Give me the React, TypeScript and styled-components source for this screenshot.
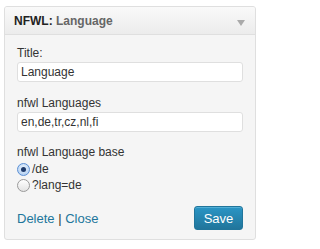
import React from "react";
import styled, { createGlobalStyle } from "styled-components";

const Global = createGlobalStyle`
  html, body { margin: 0; padding: 0; background: #ffffff; }
  body { font-family: "Liberation Sans", Arial, sans-serif; font-size: 12px; color: #333; }
`;

const Widget = styled.div`
  margin: 6px 0 0 4px;
  width: 250px;
  border: 1px solid #dfdfdf;
  border-radius: 3px;
  background: #f5f5f5;
  overflow: hidden;
`;

const Header = styled.div`
  height: 27px;
  display: flex;
  align-items: center;
  justify-content: space-between;
  padding: 0 10px 0 9px;
  background: linear-gradient(to bottom, #f9f9f9, #ececec);
  border-bottom: 1px solid #dfdfdf;
`;

const Title = styled.h4`
  margin: 0;
  font-size: 12px;
  font-weight: bold;
  color: #222;
`;

const TitleSub = styled.span`
  color: #666;
`;

const Arrow = styled.span`
  width: 0;
  height: 0;
  margin-top: 4px;
  border-left: 4px solid transparent;
  border-right: 4px solid transparent;
  border-top: 6px solid #aaa;
`;

const Body = styled.div`
  padding: 10px 12px 9px 12px;
`;

const Field = styled.div<{ $gap?: number }>`
  margin-bottom: ${(p) => p.$gap ?? 13}px;
`;

const Label = styled.label`
  display: block;
  line-height: 16px;
  color: #333;
  margin-bottom: 1px;
`;

const Input = styled.input`
  box-sizing: border-box;
  display: block;
  width: 226px;
  height: 20px;
  padding: 0 3px;
  border: 1px solid #dfdfdf;
  border-radius: 3px;
  background: #fff;
  font-family: "Liberation Sans", Arial, sans-serif;
  font-size: 12px;
  color: #333;
  outline: none;
`;

const RadioRow = styled.label`
  display: flex;
  align-items: center;
  height: 16px;
  gap: 2px;
  color: #333;
`;

const RadioDot = styled.span<{ $on?: boolean }>`
  box-sizing: border-box;
  width: 13px;
  height: 13px;
  border-radius: 50%;
  display: inline-flex;
  align-items: center;
  justify-content: center;
  border: 1px solid ${(p) => (p.$on ? "#5b8fd4" : "#9a9a9a")};
  background: ${(p) =>
    p.$on
      ? "radial-gradient(circle at 50% 35%, #e8f2fc, #a9c9ef)"
      : "linear-gradient(to bottom, #ffffff, #e3e3e3)"};
  &::after {
    content: "";
    width: 5px;
    height: 5px;
    border-radius: 50%;
    background: ${(p) => (p.$on ? "#1e3a6b" : "transparent")};
  }
`;

const Footer = styled.div`
  margin-top: 13px;
  display: flex;
  align-items: center;
  justify-content: space-between;
`;

const Links = styled.div`
  font-size: 13px;
  color: #333;
`;

const Link = styled.a`
  color: #21759b;
  text-decoration: none;
`;

const SaveButton = styled.button`
  box-sizing: border-box;
  width: 49px;
  height: 24px;
  border: 1px solid #21759b;
  border-radius: 3px;
  background: linear-gradient(to bottom, #2a95c5, #21759b);
  color: #fff;
  font-family: "Liberation Sans", Arial, sans-serif;
  font-size: 13px;
  padding: 0;
  box-shadow: inset 0 1px 0 rgba(120, 200, 230, 0.5);
`;

export default function App() {
  return (
    <>
      <Global />
      <Widget>
        <Header>
          <Title>
            NFWL: <TitleSub>Language</TitleSub>
          </Title>
          <Arrow />
        </Header>
        <Body>
          <Field>
            <Label>Title:</Label>
            <Input defaultValue="Language" />
          </Field>
          <Field $gap={12}>
            <Label>nfwl Languages</Label>
            <Input defaultValue="en,de,tr,cz,nl,fi" />
          </Field>
          <Field $gap={0}>
            <Label>nfwl Language base</Label>
            <RadioRow>
              <RadioDot $on />
              /de
            </RadioRow>
            <RadioRow>
              <RadioDot />
              ?lang=de
            </RadioRow>
          </Field>
          <Footer>
            <Links>
              <Link href="#">Delete</Link> | <Link href="#">Close</Link>
            </Links>
            <SaveButton>Save</SaveButton>
          </Footer>
        </Body>
      </Widget>
    </>
  );
}
